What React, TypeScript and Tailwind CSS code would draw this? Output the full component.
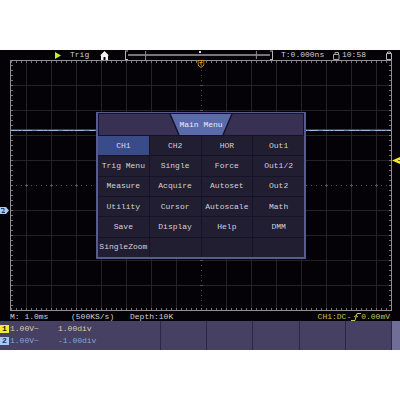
import React, { useState } from "react";

const menuItems = [
  "CH1", "CH2", "HOR", "Out1",
  "Trig Menu", "Single", "Force", "Out1/2",
  "Measure", "Acquire", "Autoset", "Out2",
  "Utility", "Cursor", "Autoscale", "Math",
  "Save", "Display", "Help", "DMM",
  "SingleZoom",
];

const channels = [
  { id: "1", scale: "1.00V~", offset: "1.00div", badge: "bg-[#f5ea38] text-[#292510]", text: "text-[#d8ce9c]" },
  { id: "2", scale: "1.00V~", offset: "-1.00div", badge: "bg-[#a5c9f3] text-[#183565]", text: "text-[#85a5da]" },
];

const range = (from: number, to: number, step: number) => {
  const out: number[] = [];
  for (let v = from; v <= to; v += step) out.push(v);
  return out;
};

const StatusBar = () => (
  <header className="flex h-[10px] items-center pl-[55px] pr-2 text-[#d2d0d4]">
    <svg className="h-2 w-[6px]" viewBox="0 0 6 8" fill="#b9f52c">
      <path d="M0 1 L6 4.5 L0 8Z" />
    </svg>
    <span className="ml-[9px] w-[30px]">Trig</span>
    <svg className="h-[9px] w-[9px]" viewBox="0 0 9 9" fill="#f3f3f3">
      <path d="M4.5 0 L9 4.500 H8 V9 H5.5 V6 H3.5 V9 H1 V4.500 H0Z" />
    </svg>
    <div className="relative ml-4 mr-2 h-[10px] flex-1">
      <svg className="h-full w-full" viewBox="0 0 147 10" preserveAspectRatio="none" fill="none" stroke="#b8b6bb">
        <path d="M3 1 H0.5 V9.5 H3" />
        <path d="M144 1 H146.500 V9.500 H144" />
        <path d="M3 5 H144" stroke="#77757b" strokeWidth="2" />
        <path d="M20.500 1 V10 M130.500 1 V9" stroke="#8d8b90" />
      </svg>
      <span className="absolute left-1/2 top-px h-[2px] w-[2px] bg-[#d8d8d8]" />
    </div>
    <span className="w-[52px]">T:0.000ns</span>
    <svg className="h-[9px] w-[7px]" viewBox="0 0 7 9" fill="none" stroke="#aaa7ad">
      <path d="M2 3.500 V1.500 H5.500 V3.500" />
      <path d="M0.500 3.500 H6 V8.500 H0.500Z" />
    </svg>
    <span className="ml-[2px] w-[44px]">10:58</span>
    <svg className="h-[9px] w-[6px]" viewBox="0 0 6 9" fill="none" stroke="#b8b6bb">
      <path d="M1.500 2.500 V1 H4.500 V2.500 M0.500 2.500 H5.500 V8.500 H0.500Z" />
    </svg>
  </header>
);

const Graticule = () => (
  <svg className="block h-[252px] w-full" viewBox="0 0 382 252" preserveAspectRatio="none" fill="none">
    <rect width="382" height="252" fill="#040107" />
    <g stroke="#242128">
      {range(16, 366, 25).filter((x) => x !== 191).map((x) => (
        <path key={x} d={`M${x + 0.5} 1 V251`} />
      ))}
      {range(25, 225, 25).filter((y) => y !== 125).map((y) => (
        <path key={y} d={`M1 ${y + 0.5} H381`} />
      ))}
    </g>
    <g stroke="#55525a">
      <path d="M1 125.500 H381" strokeDasharray="1 4" />
      <path d="M191.500 0 V251" strokeDasharray="1 4" />
      {range(16, 366, 25).map((x) => (
        <path key={x} d={`M${x - 1} 125.500 H${x + 2} M${x + 0.5} 124 V127`} />
      ))}
      {range(25, 225, 25).map((y) => (
        <path key={y} d={`M190 ${y + 0.5} H193`} />
      ))}
    </g>
    <g stroke="#77747c">
      {range(1, 381, 5).map((x) => (
        <path key={x} d={`M${x + 0.5} 0 V3 M${x + 0.5} 248 V251`} />
      ))}
      {range(5, 245, 5).map((y) => (
        <path key={y} d={`M0 ${y + 0.5} H3 M379 ${y + 0.5} H382`} />
      ))}
    </g>
    <rect x="0.500" y="0.500" width="381" height="250" stroke="#929096" />
    <path d="M1 70 H381" stroke="#2b4068" strokeWidth="2" />
    <path d="M1 70.500 H381" stroke="#7389b6" />
    <path d="M1 70.500 H381" stroke="#a3b6da" strokeDasharray="6 1 3 2 9 5" />
  </svg>
);

const MainMenu = () => {
  const [active, setActive] = useState("CH1");

  return (
    <nav
      aria-label="Main Menu"
      className="absolute left-1/2 top-[52px] w-[210px] -translate-x-1/2 border-2 border-t border-[#565b91] bg-[#14132a]"
    >
      <div className="relative flex h-[23px] items-center justify-center border border-[#15132b] bg-[#383154]">
        <svg className="absolute left-1/2 top-0 h-[21px] w-[66px] -translate-x-1/2" viewBox="0 0 66 21">
          <path d="M2 0 H64 L55 21 H11Z" fill="#5b6aa9" />
          <path d="M2 0 L11 21 M64 0 L55 21" stroke="#15132b" strokeWidth="1.500" />
        </svg>
        <h1 className="relative text-[#e9eaf5]">Main Menu</h1>
      </div>
      <div className="grid h-[121px] grid-cols-4 grid-rows-6 gap-px">
        {menuItems.map((item) => (
          <button
            key={item}
            type="button"
            onClick={() => setActive(item)}
            className={`flex items-center justify-center whitespace-nowrap ${
              active === item ? "bg-[#394b89] text-[#d5ddf4]" : "bg-[#211e31] text-[#d3d1d9]"
            }`}
          >
            {item}
          </button>
        ))}
        <div className="bg-[#211e31]" />
        <div className="bg-[#211e31]" />
        <div className="bg-[#211e31]" />
      </div>
    </nav>
  );
};

const App = () => (
  <main className="min-h-screen bg-white py-[50px] font-['Liberation_Mono',monospace] text-[8px] leading-[10px]">
    <div className="bg-[#040107]">
      <StatusBar />

      <section className="relative pl-[10px] pr-2">
        <div className="relative">
          <Graticule />
          {/* trigger position */}
          <svg className="absolute left-1/2 top-0 h-2 w-[7px] -translate-x-1/2" viewBox="0 0 7 8" fill="none" stroke="#d09724">
            <path d="M0.500 0.500 H6.500 V5 L3.500 7.500 L0.500 5Z M2 2.500 H5 M3.500 2.500 V5" />
          </svg>
          <MainMenu />
        </div>
        {/* channel 2 zero level */}
        <svg className="absolute left-0 top-[147px] h-[7px] w-[9px]" viewBox="0 0 9 7">
          <path d="M0 0 H6 L9 3.500 L6 7 H0Z" fill="#a5c9f3" />
          <path d="M1 1.500 H4 V3.500 L2 5.500 H5" fill="none" stroke="#1d3b6a" />
        </svg>
        {/* trigger level */}
        <svg className="absolute right-0 top-[97px] h-[7px] w-2" viewBox="0 0 8 7">
          <path d="M0 3.500 L8 0 V7Z" fill="#f5e72f" />
          <path d="M6 3.500 H8" stroke="#625a0c" />
        </svg>
      </section>

      <div className="flex h-[9px] items-center px-[10px] text-[#d2d0d4]">
        <span className="w-[61px]">M: 1.0ms</span>
        <span className="w-[59px]">(500KS/s)</span>
        <span>Depth:10K</span>
        <span className="ml-auto flex items-center text-[#c9c456]">
          CH1:DC-
          <svg className="h-2 w-[10px]" viewBox="0 0 10 8" fill="none" stroke="currentColor">
            <path d="M0 7.500 H4 L6 0.500 H10 M3 4 L5 2.500 L7 4" />
          </svg>
          0.00mV
        </span>
      </div>

      <footer className="flex h-[29px] bg-[#464163]">
        <div className="flex w-[161px] flex-col gap-[2px] border-r border-[#2c2747] pt-[3px]">
          {channels.map((ch) => (
            <div key={ch.id} className={`flex items-center ${ch.text}`}>
              <span className={`flex h-2 w-[9px] items-center justify-center font-bold ${ch.badge}`}>{ch.id}</span>
              <span className="ml-px w-12">{ch.scale}</span>
              <span>{ch.offset}</span>
            </div>
          ))}
        </div>
        {range(1, 5, 1).map((n) => (
          <div key={n} className="flex-1 border-r border-[#2c2747]" />
        ))}
        <div className="w-2 bg-[#706e98]" />
      </footer>
    </div>
  </main>
);

export default App;
